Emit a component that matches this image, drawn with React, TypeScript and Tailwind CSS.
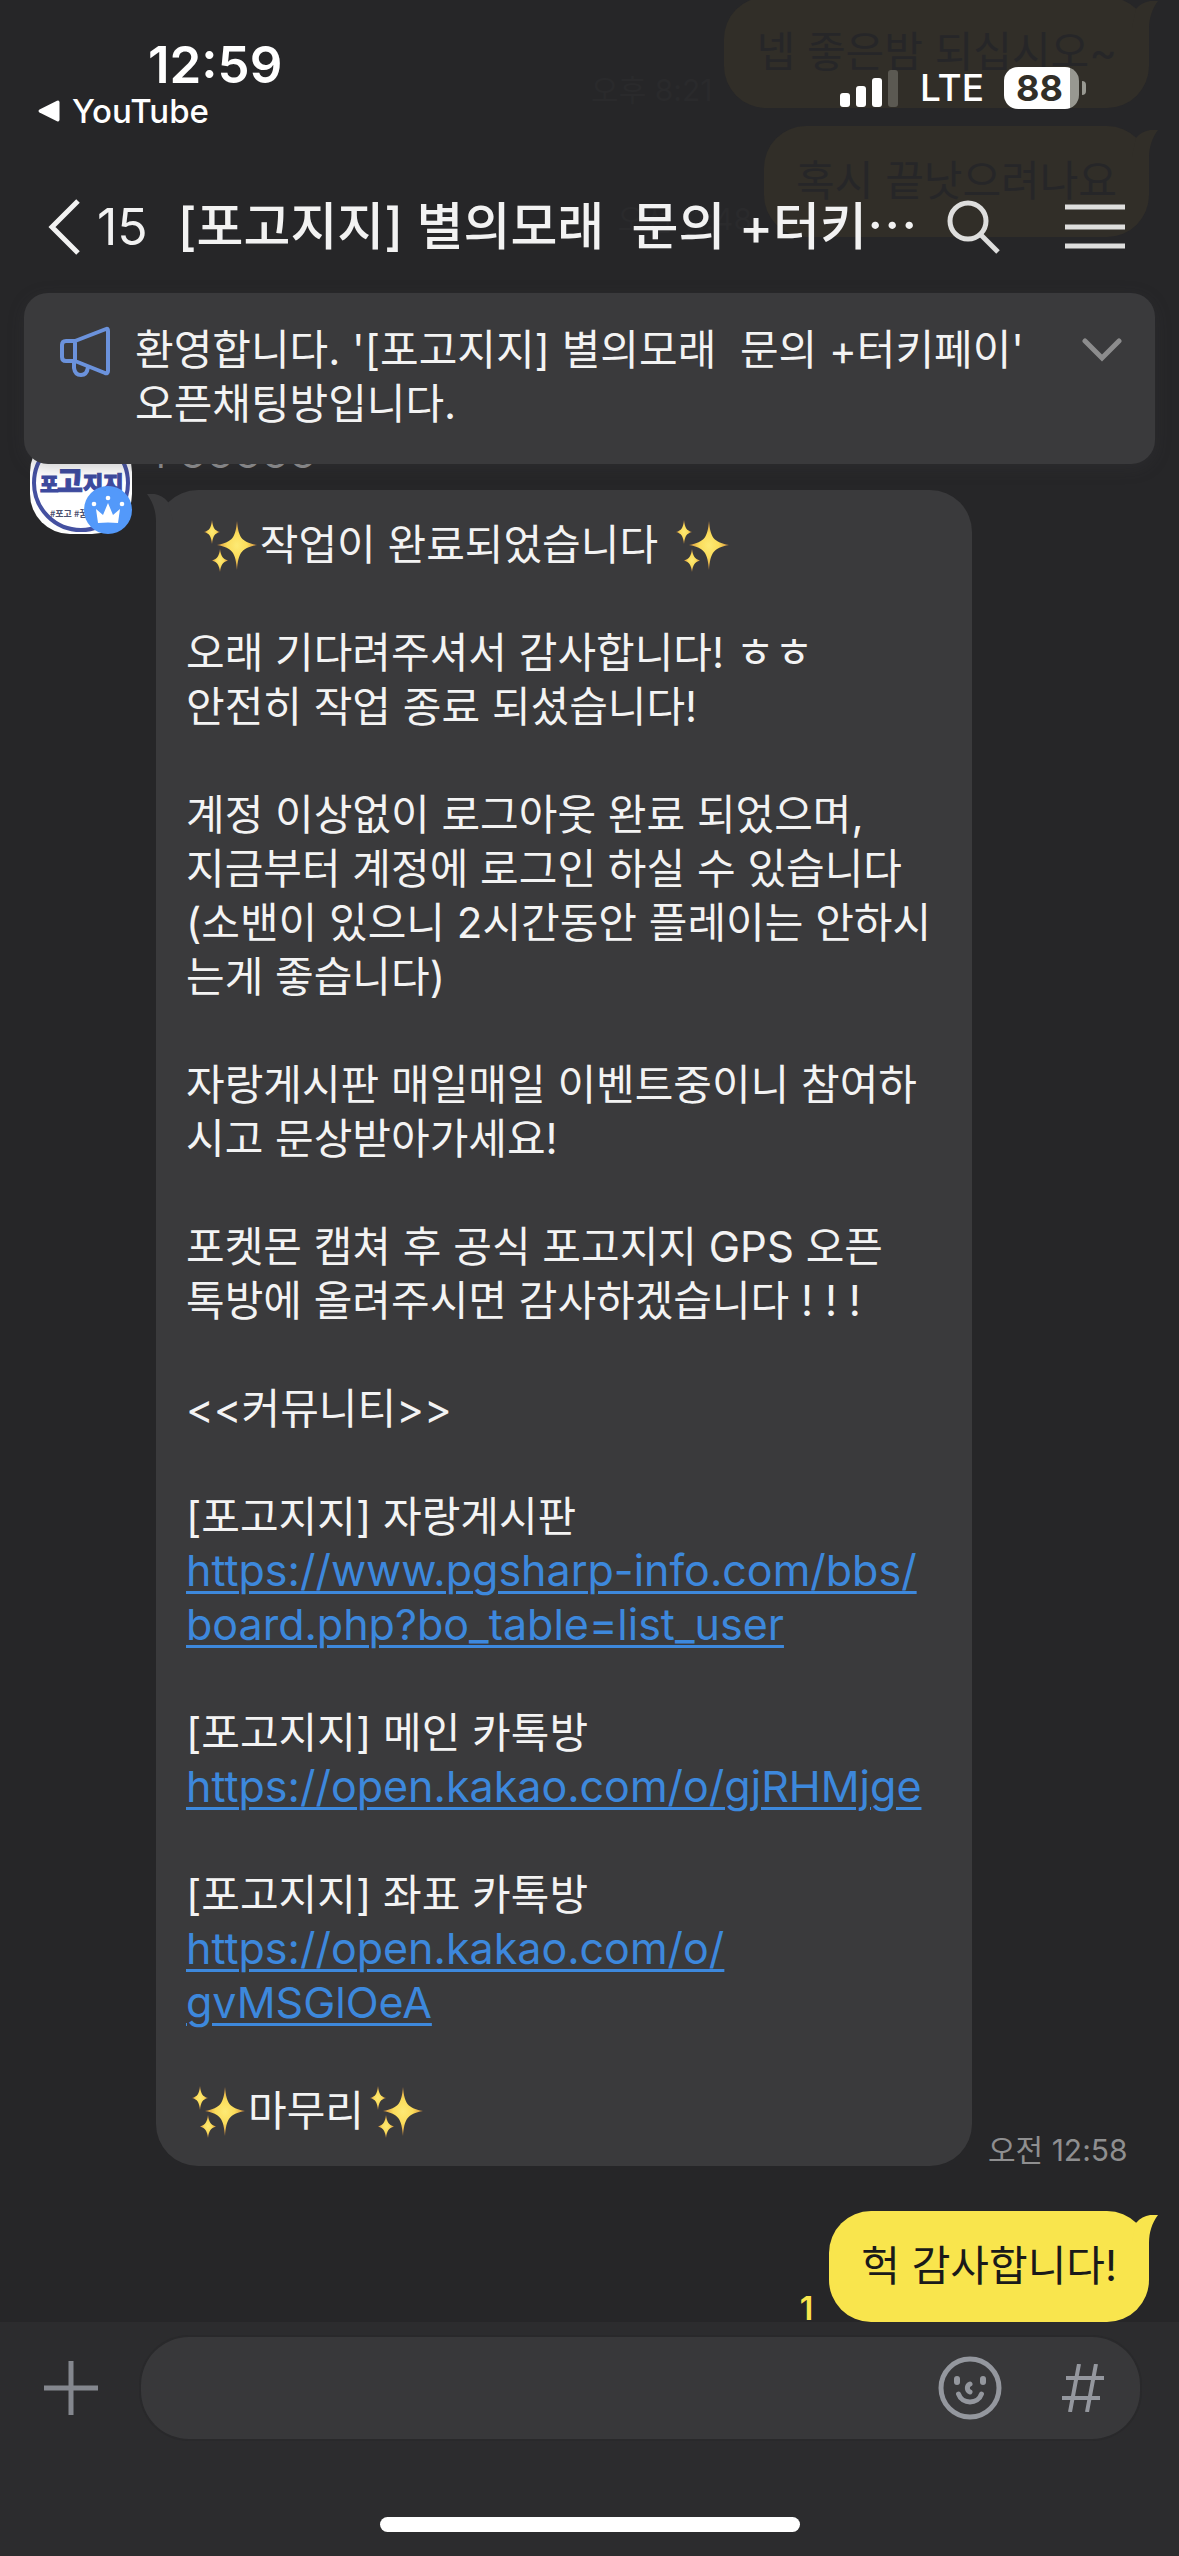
import React from "react";

const fontStack =
  "font-['Inter','Noto_Sans_CJK_KR',sans-serif] tracking-normal antialiased";

const Sparkles = () => (
  <svg
    role="img"
    aria-label="반짝임"
    viewBox="0 0 60 54"
    className="inline-block w-[62px] h-[54px] align-top"
  >
    <defs>
      <radialGradient id="spark">
        <stop offset="0" stopColor="#fdea75" />
        <stop offset="0.5" stopColor="#fbdc5a" />
        <stop offset="1" stopColor="#d08a3c" />
      </radialGradient>
    </defs>
    <g fill="url(#spark)">
      <path d="M38 3C39.500 19 42 24 58 27C42 30 39.500 35 38 52C36.500 35 34 30 18 27C34 24 36.500 19 38 3Z" />
      <path d="M13 2C14 10 15.500 12.500 21 14C15.500 15.500 14 18 13 26C12 18 10.500 15.500 5 14C10.500 12.500 12 10 13 2Z" />
      <path d="M21 31C22 38 23.500 41 29 42.500C23.500 44 22 47 21 54C20 47 18.500 44 13 42.500C18.500 41 20 38 21 31Z" />
    </g>
  </svg>
);

const RightTail = ({ className }: { className: string }) => (
  <svg
    viewBox="0 0 26 44"
    className={`absolute top-1 -right-[9px] w-[26px] h-[44px] ${className}`}
  >
    <path d="M26 0C17 -1 10 1 4 8L0 26L17 44V28C17 17 20 8 26 0Z" />
  </svg>
);

const FadedMessage = ({ time, text }: { time: string; text: string }) => (
  <div className="flex items-end">
    <span className="mr-3 text-[30px] leading-[36px] text-[#2a2a2c]">
      {time}
    </span>
    <p className="relative rounded-[42px] bg-[#312e28] px-[32px] pt-[28px] pb-[29px] text-[42px] leading-[54px] text-[#262628]">
      {text}
      <RightTail className="fill-[#312e28]" />
    </p>
  </div>
);

const ChatLink = ({ url, children }: { url: string; children: React.ReactNode }) => (
  <a
    href={url}
    className="text-[43px] leading-none text-[#3d88dc] underline decoration-[3px] underline-offset-[5px]"
  >
    {children}
  </a>
);

const StatusBar = () => (
  <div className="flex h-[132px] items-start justify-between pl-[38px] pr-[93px]">
    <div className="pt-[36px]">
      <p className="pl-[110px] text-[51px] leading-[58px] font-semibold text-white">
        12:59
      </p>
      <a
        href="#youtube"
        className="flex items-center gap-3 text-[33px] leading-[34px] font-medium text-white"
      >
        <svg viewBox="0 0 22 22" className="w-[22px] h-[22px] fill-white">
          <path d="M1.500 9.500L19 .8Q21.500 0 21.500 2.500V19.500Q21.500 22 19 21.200L1.500 12.500Q-.5 11 1.500 9.500Z" />
        </svg>
        YouTube
      </a>
    </div>
    <div className="flex items-center pt-[67px]">
      <svg viewBox="0 0 58 38" className="w-[58px] h-[38px] fill-white">
        <rect x="0" y="24" width="10" height="14" rx="3" />
        <rect x="16" y="17" width="10" height="21" rx="3" />
        <rect x="32" y="9" width="10" height="29" rx="3" />
        <rect x="48" y="1" width="10" height="37" rx="3" fill="#5b5952" />
      </svg>
      <span className="ml-[22px] text-[37px] leading-[42px] font-medium text-white">
        LTE
      </span>
      <div className="ml-5 flex h-[42px] w-[75px] items-center justify-center rounded-[14px] bg-linear-to-r from-white from-88% to-[#989891] to-88% pr-1 text-[36px] font-bold text-[#312e28]">
        88
      </div>
      <div className="ml-[3px] h-[14px] w-[4px] rounded-r-full bg-[#989891]" />
    </div>
  </div>
);

const TopBar = () => (
  <header className="relative h-[293px] shrink-0 overflow-hidden">
    <div
      aria-hidden="true"
      className="absolute inset-0 flex flex-col items-end justify-end gap-[18px] pr-[30px] pb-[56px]"
    >
      <FadedMessage time="오후 8:21" text="넵 좋은밤 되십시오~" />
      <FadedMessage time="오전 11:48" text="혹시 끝낫으려나요" />
    </div>
    <div className="relative">
      <StatusBar />
      <nav className="flex h-[190px] items-center pl-[47px] pr-[54px] text-[#f2f2f2]">
        <button className="flex items-center gap-[16px]" aria-label="뒤로">
          <svg
            viewBox="0 0 34 56"
            className="w-[34px] h-[56px] fill-none stroke-[#f2f2f2] stroke-[5]"
          >
            <path d="M31 2L5 28L31 54" />
          </svg>
          <span className="text-[50px] leading-[60px]">15</span>
        </button>
        <h1 className="ml-[30px] min-w-0 flex-1 overflow-hidden whitespace-pre text-[51px] leading-[66px] font-medium">
          {"[포고지지] 별의모래  문의 +터키⋯"}
        </h1>
        <button aria-label="검색" className="ml-4">
          <svg
            viewBox="0 0 54 54"
            className="w-[54px] h-[54px] fill-none stroke-[#dededd] stroke-[5]"
          >
            <circle cx="21" cy="21" r="18" />
            <path d="M34 35L51 52" />
          </svg>
        </button>
        <button aria-label="메뉴" className="ml-[64px]">
          <svg
            viewBox="0 0 60 54"
            className="w-[60px] h-[54px] stroke-[#dededd] stroke-[5]"
          >
            <path d="M0 7H60M0 27H60M0 46H60" />
          </svg>
        </button>
      </nav>
    </div>
  </header>
);

const Notice = () => (
  <section className="relative z-10 mx-6 flex h-[171px] items-start rounded-[24px] bg-[#3a3a3c] pt-[30px] pl-[35px] pr-[33px] shadow-[0_4px_16px_rgba(60,60,62,0.25)]">
    <svg
      viewBox="0 0 52 52"
      className="mt-[3px] w-[52px] h-[52px] shrink-0 fill-none stroke-[#6b92dc] stroke-[4] [stroke-linejoin:round]"
    >
      <path d="M16 15L47 3Q49 2 49 5V45Q49 48 46 47L16 35H7Q3 35 3 31V19Q3 15 7 15ZM16 15V35" />
      <path d="M15 36V42Q16 49 22 49Q28 49 29 41" />
    </svg>
    <p className="ml-6 flex-1 whitespace-pre text-[42px] leading-[54px] text-[#f3f3f3]">
      {"환영합니다. '[포고지지] 별의모래  문의 +터키페이'\n오픈채팅방입니다."}
    </p>
    <button aria-label="공지 펼치기" className="mt-[15px]">
      <svg
        viewBox="0 0 40 24"
        className="w-[40px] h-[24px] fill-none stroke-[#8c8c8d] stroke-[5]"
      >
        <path d="M3 3L20 20L37 3" strokeLinecap="round" />
      </svg>
    </button>
  </section>
);

const Avatar = () => (
  <svg
    role="img"
    aria-label="프로필"
    viewBox="0 0 102 102"
    className="w-[102px] h-[102px] shrink-0"
  >
    <rect width="102" height="102" rx="40" fill="#fdfdfd" />
    <circle cx="51" cy="51" r="47" fill="#fff" stroke="#4450a0" strokeWidth="4" />
    <g
      fill="#3d4a9e"
      stroke="#3d4a9e"
      strokeWidth="1"
      fontFamily="Noto Sans CJK KR"
      fontWeight="900"
    >
      <text x="10" y="60" fontSize="20">포</text>
      <text x="27" y="60" fontSize="28">고</text>
      <text x="53" y="60" fontSize="22">지지</text>
    </g>
    <text x="20" y="85" fontSize="9" fontWeight="700" fill="#4d5270" fontFamily="Noto Sans CJK KR">
      #포고 #꿈
    </text>
    <circle cx="78" cy="78" r="24" fill="#5399fa" />
    <g fill="#fff">
      <path d="M66 77L73 83L78 71L83 83L90 77L88 91Q78 90 68 91Z" />
      <circle cx="78" cy="66" r="2.300" />
      <circle cx="64" cy="72" r="2.300" />
      <circle cx="92" cy="72" r="2.300" />
    </g>
  </svg>
);

const ReceivedMessage = () => (
  <div className="-mt-8 flex items-end pl-[30px]">
    <div className="self-start">
      <Avatar />
    </div>
    <div className="ml-6 w-full max-w-[816px]">
      <p className="mb-3 text-[36px] leading-[46px] text-[#929293]">POOOOO</p>
      <div className="relative rounded-[42px] bg-[#3a3a3c] px-[30px] py-[28px] text-[42px] leading-[54px] text-[#f3f3f3]">
        <svg
          viewBox="0 0 26 44"
          className="absolute top-1 -left-[9px] w-[26px] h-[44px] fill-[#3a3a3c]"
        >
          <path d="M0 0C9 -1 15 1 21 8L26 26L9 44V28C9 17 6 8 0 0Z" />
        </svg>
        <p className="whitespace-pre">
          {" "}
          <Sparkles />
          {"작업이 완료되었습니다 "}
          <Sparkles />
          {`

오래 기다려주셔서 감사합니다! ㅎㅎ
안전히 작업 종료 되셨습니다!

계정 이상없이 로그아웃 완료 되었으며,
지금부터 계정에 로그인 하실 수 있습니다
(소밴이 있으니 2시간동안 플레이는 안하시
는게 좋습니다)

자랑게시판 매일매일 이벤트중이니 참여하
시고 문상받아가세요!

포켓몬 캡쳐 후 공식 포고지지 GPS 오픈
톡방에 올려주시면 감사하겠습니다 ! ! !

<<커뮤니티>>

[포고지지] 자랑게시판
`}
          <ChatLink url="https://www.pgsharp-info.com/bbs/board.php?bo_table=list_user">
            {"https://www.pgsharp-info.com/bbs/\nboard.php?bo_table=list_user"}
          </ChatLink>
          {"\n\n[포고지지] 메인 카톡방\n"}
          <ChatLink url="https://open.kakao.com/o/gjRHMjge">
            https://open.kakao.com/o/gjRHMjge
          </ChatLink>
          {"\n\n[포고지지] 좌표 카톡방\n"}
          <ChatLink url="https://open.kakao.com/o/gvMSGlOeA">
            {"https://open.kakao.com/o/\ngvMSGlOeA"}
          </ChatLink>
          {"\n\n"}
          <Sparkles />
          마무리
          <Sparkles />
        </p>
      </div>
    </div>
    <time className="ml-4 shrink-0 text-[30px] leading-[32px] text-[#8f8f90]">
      오전 12:58
    </time>
  </div>
);

const SentMessage = () => (
  <div className="mt-[45px] flex items-end justify-end pr-[30px]">
    <span className="mr-4 text-[32px] leading-[26px] font-semibold text-[#f9e54d]">
      1
    </span>
    <p className="relative rounded-[42px] bg-[#f9e54d] px-[32px] pt-[28px] pb-[29px] text-[42px] leading-[54px] text-[#1a1a1a]">
      헉 감사합니다!
      <RightTail className="fill-[#f9e54d]" />
    </p>
  </div>
);

const Composer = () => (
  <footer className="flex shrink-0 flex-col items-center bg-[#2c2c2e] pt-[15px]">
    <div className="flex w-full items-center pl-[44px] pr-[39px]">
      <button aria-label="첨부">
        <svg
          viewBox="0 0 54 54"
          className="w-[54px] h-[54px] stroke-[#84878e] stroke-[5]"
        >
          <path d="M0 27H54M27 0V54" />
        </svg>
      </button>
      <div className="ml-[43px] flex h-[102px] flex-1 items-center rounded-[48px] bg-[#38383a] pr-[36px] ring-2 ring-[#29292b]">
        <input
          type="text"
          aria-label="메시지 입력"
          className="min-w-0 flex-1 bg-transparent pl-10 text-[42px] text-white outline-none"
        />
        <button aria-label="이모티콘">
          <svg
            viewBox="0 0 64 64"
            className="w-[64px] h-[64px] fill-none stroke-[#94979e] stroke-[5]"
          >
            <circle cx="32" cy="32" r="29" />
            <path
              d="M20.500 38C24 48.500 40 48.500 43.500 38M32 28C28.500 29.500 28.500 34.500 32 36"
              strokeLinecap="round"
            />
            <rect x="16" y="20" width="6" height="9" rx="3" fill="#94979e" stroke="none" />
            <rect x="42" y="20" width="6" height="9" rx="3" fill="#94979e" stroke="none" />
          </svg>
        </button>
        <button aria-label="샵검색" className="ml-[60px]">
          <svg
            viewBox="0 0 42 48"
            className="w-[42px] h-[48px] stroke-[#94979e] stroke-[4]"
          >
            <path d="M4 14H42M0 34H38M17 0L8 48M34 0L25 48" />
          </svg>
        </button>
      </div>
    </div>
    <div className="mt-[78px] mb-6 h-[15px] w-[420px] rounded-full bg-white" />
  </footer>
);

const App = () => {
  return (
    <div className={`flex min-h-screen flex-col bg-[#262628] ${fontStack}`}>
      <TopBar />
      <Notice />
      <main className="flex-1">
        <ReceivedMessage />
        <SentMessage />
      </main>
      <Composer />
    </div>
  );
};

export default App;
